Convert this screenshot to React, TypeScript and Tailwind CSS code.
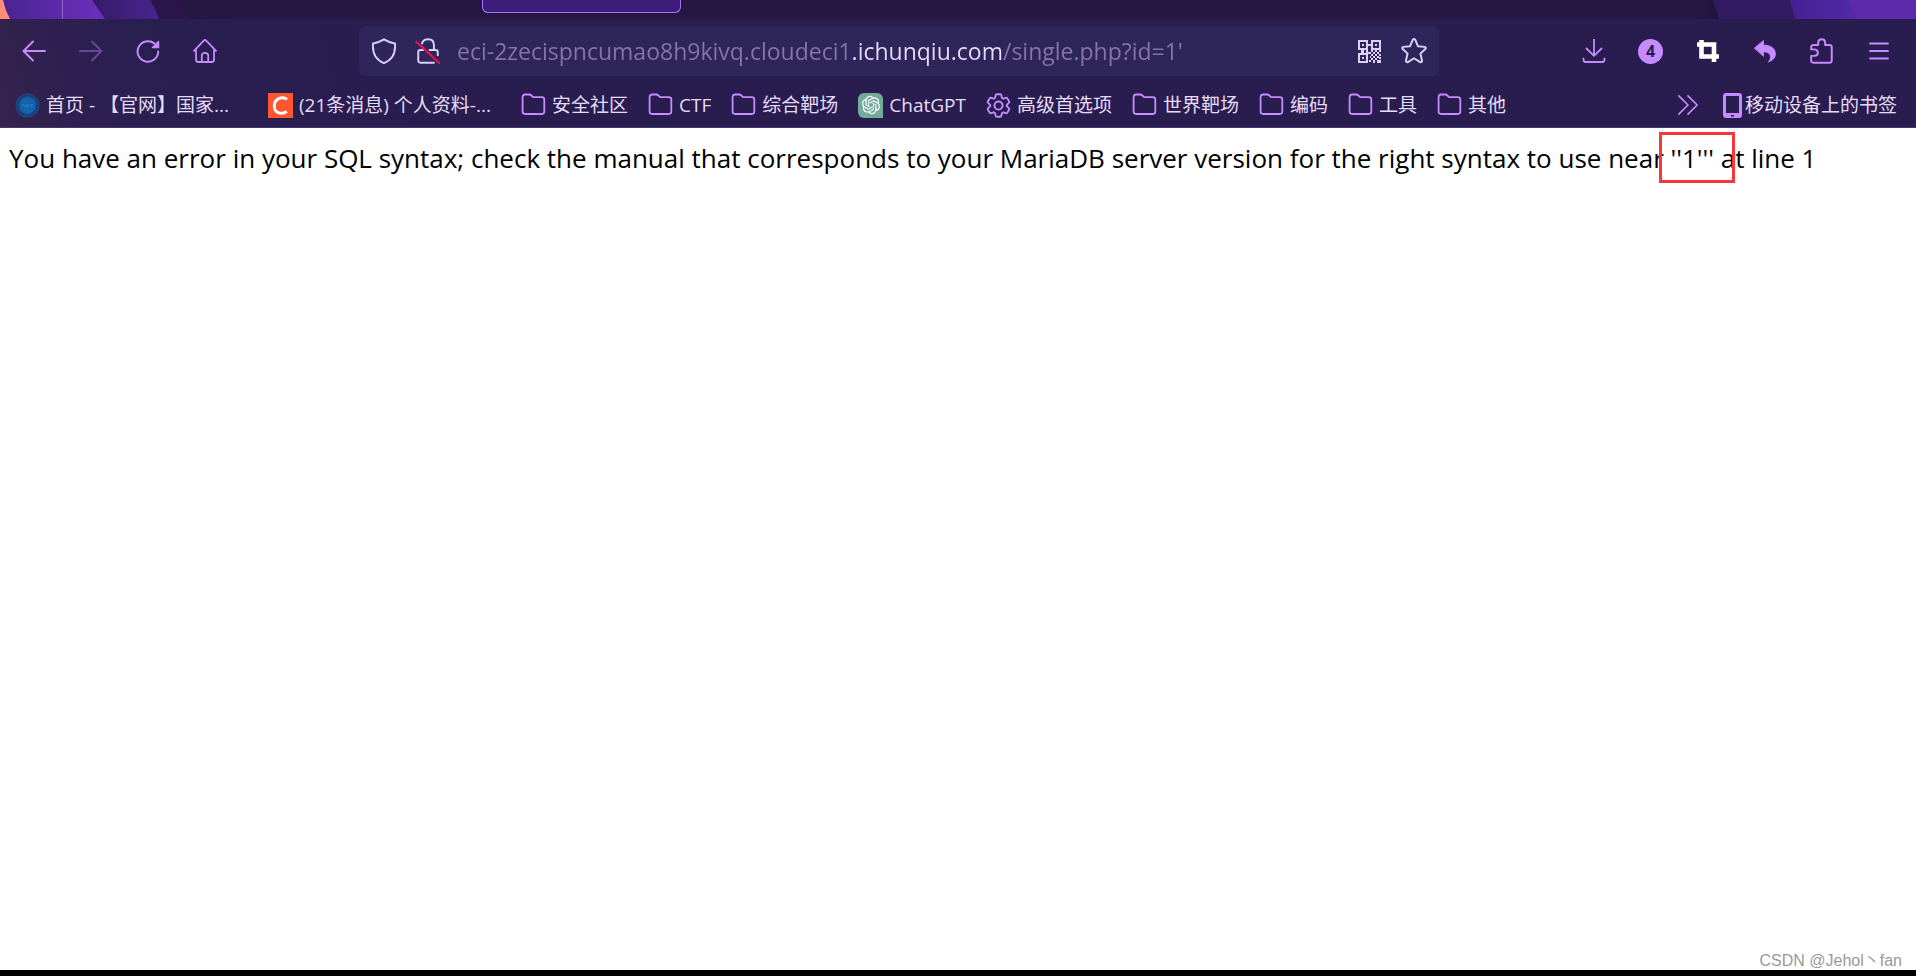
import type { ReactNode } from "react";
import { RiOpenaiFill } from "react-icons/ri";

const FONT = "font-['Open_Sans','Noto_Sans_CJK_SC',sans-serif]";

type IconProps = { children: ReactNode; className?: string };

function Icon({ children, className = "size-6 text-[#c58bff]" }: IconProps) {
  return (
    <svg
      viewBox="0 0 24 24"
      className={`shrink-0 ${className}`}
      fill="none"
      stroke="currentColor"
      strokeWidth="1.8"
      strokeLinecap="round"
      strokeLinejoin="round"
      aria-hidden="true"
    >
      {children}
    </svg>
  );
}

function FolderIcon() {
  return (
    <Icon className="h-6 w-[25px] text-[#c58bff]">
      <path d="M3.5 1.5H7.6C8.6 1.5 9.2 1.8 9.9 2.5L11.6 4.1H20.4C21.8 4.1 22.8 5.1 22.8 6.5V18.6C22.8 20 21.8 21 20.4 21H3.6C2.2 21 1.1 20 1.1 18.6V3.9C1.1 2.5 2.1 1.5 3.5 1.5Z" />
    </Icon>
  );
}

function SealIcon() {
  return (
    <svg viewBox="0 0 25 25" className="size-[25px] shrink-0" aria-hidden="true">
      <circle cx="12.5" cy="12.5" r="12" fill="#174f91" />
      <circle cx="12.5" cy="12.5" r="10.2" fill="none" stroke="#253569" strokeWidth="2.4" strokeDasharray="1.6 1" />
      <circle cx="12.5" cy="12.5" r="8" fill="#1464ad" />
      <path d="M7 14L8.5 11.5L10 14M11.5 11.5V14L13 11.5V14M15 11.5H18M15 14H18M16.5 11.5V14" fill="none" stroke="#2c7fc4" strokeWidth=".8" />
    </svg>
  );
}

function CsdnIcon() {
  return (
    <svg viewBox="0 0 25 25" className="size-[25px] shrink-0" aria-hidden="true">
      <path fill="#ff5531" d="M0 0H25V25H0Z" />
      <path d="M19 6.4C16.8 4.7 13.4 4.4 10.7 5.7C7.7 7.1 6.2 10 6.3 13.2C6.4 17.7 9.2 20.2 13.3 20.2C15.4 20.2 17.1 19.7 18.8 18.5" fill="none" stroke="#fff" strokeWidth="3" />
    </svg>
  );
}

function ChatGptIcon() {
  return (
    <span className="flex size-[25px] shrink-0 items-center justify-center rounded-md rounded-br-none bg-[#74aa9c]">
      <RiOpenaiFill className="size-[22px] text-white" aria-hidden="true" />
    </span>
  );
}

function GearIcon() {
  return (
    <Icon className="size-[25px] text-[#c58bff]">
      <circle cx="12" cy="12" r="3.9" />
      <path d="M10.4 1.2H13.6Q14.6 1.2 14.8 2.3L15.2 4.6L16.6 5.5L18.9 4.7Q20 4.3 20.5 5.2L22.2 8Q22.7 9 21.8 9.7L20 11.2V12.8L21.8 14.3Q22.7 15 22.2 16L20.5 18.8Q20 19.7 18.9 19.3L16.6 18.5L15.2 19.4L14.8 21.7Q14.6 22.8 13.6 22.8H10.4Q9.4 22.8 9.2 21.7L8.8 19.4L7.4 18.5L5.1 19.3Q4 19.7 3.5 18.8L1.8 16Q1.3 15 2.2 14.3L4 12.8V11.2L2.2 9.7Q1.3 9 1.8 8L3.5 5.2Q4 4.3 5.1 4.7L7.4 5.5L8.8 4.6L9.2 2.3Q9.4 1.2 10.4 1.2Z" />
    </Icon>
  );
}

function QrIcon() {
  return (
    <svg viewBox="0 0 23 23" className="size-[23px] shrink-0" fill="#ddd0f6" shapeRendering="crispEdges" aria-hidden="true">
      <path fillRule="evenodd" d="M0 0H10V10H0ZM2 2V8H8V2ZM13 0H23V10H13ZM15 2V8H21V2ZM0 13H10V23H0ZM2 15V21H8V15Z" />
      <path d="M4 4H6V6H4ZM17 4H19V6H17ZM4 17H6V19H4ZM10 4H13V6H10ZM3 10H6V13H3ZM8 10H10V13H8ZM10 12H13V14H10ZM13 10H15V12H13ZM17 10H19V12H17ZM15 12H17V14H15ZM19 12H21V14H19ZM21 10H23V12H21ZM13 14H15V16H13ZM17 14H19V16H17ZM21 14H23V16H21ZM12 16H13V18H12ZM15 16H17V18H15ZM19 16H21V18H19ZM13 18H15V20H13ZM17 18H19V20H17ZM21 17H23V19H21ZM11 20H13V22H11ZM15 20H17V23H15ZM19 20H23V23H19Z" />
    </svg>
  );
}

function ToolButton({ label, children }: { label: string; children: ReactNode }) {
  return (
    <button type="button" aria-label={label} className="flex h-12 w-[57px] items-center justify-center">
      {children}
    </button>
  );
}

function TabStrip() {
  return (
    <div className="relative flex h-[19px] overflow-hidden bg-[#251741]">
      <svg viewBox="0 0 200 19" className="absolute left-0 top-0 h-[19px] w-[200px]" aria-hidden="true">
        <defs>
          <linearGradient id="left-a" x1="0" x2="1">
            <stop offset="0" stopColor="#4b2391" />
            <stop offset="1" stopColor="#6b30bd" />
          </linearGradient>
          <linearGradient id="left-b" x1="0" x2="1">
            <stop offset="0" stopColor="#36196a" />
            <stop offset="1" stopColor="#48258f" />
          </linearGradient>
        </defs>
        <path fill="#2a164a" d="M150 0H177L190 19H158Z" />
        <path fill="url(#left-b)" d="M90 0H150Q156 9 159 19H104Z" />
        <path fill="url(#left-a)" d="M0 0H92L105 19H0Z" />
        <path fill="#ff8d78" d="M0 0H3Q5 10 10 19H0Z" />
        <path fill="#8c65c5" d="M62 0H63V19H62Z" />
      </svg>
      <svg viewBox="0 0 216 19" className="absolute right-0 top-0 h-[19px] w-[216px]" aria-hidden="true">
        <defs>
          <linearGradient id="right-a" x1="0" x2="1">
            <stop offset="0" stopColor="#251741" />
            <stop offset="1" stopColor="#20123f" />
          </linearGradient>
          <linearGradient id="right-b" x1="0" x2="1">
            <stop offset="0" stopColor="#452093" />
            <stop offset="1" stopColor="#5229a8" />
          </linearGradient>
        </defs>
        <path fill="url(#right-a)" d="M0 0H14L20 19H0Z" />
        <path fill="#321b62" d="M13 0H92L95 19H19Z" />
        <path fill="url(#right-b)" d="M90 0H150L158 19H95Z" />
        <path fill="#5c2aaa" d="M149 0H216V19H156Z" />
      </svg>
      <button
        type="button"
        aria-label="Tab"
        className="ml-[482px] h-[13px] w-[199px] rounded-b-md border border-t-0 border-[#ac70ff] bg-[#3d1f7b]"
      />
    </div>
  );
}

function NavBar() {
  return (
    <div className="flex h-16 items-center pr-[9px] pl-[5px]">
      <div className="flex">
        <ToolButton label="Back">
          <Icon>
            <path d="M23 12H1.5M11 2.5L1.5 12L11 21.5" strokeWidth="2" />
          </Icon>
        </ToolButton>
        <ToolButton label="Forward">
          <Icon className="size-6 text-[#6b4595]">
            <path d="M1 12H22.5M13 2.5L22.5 12L13 21.5" strokeWidth="2" />
          </Icon>
        </ToolButton>
        <ToolButton label="Reload">
          <Icon>
            <path d="M22.2 12.5A10.3 10.3 0 1 1 18.3 4.4" strokeWidth="2" />
            <path d="M22.5 2.5V8.5H16.5Z" fill="currentColor" strokeWidth="1.5" />
          </Icon>
        </ToolButton>
        <ToolButton label="Home">
          <Icon>
            <path d="M1 11.8L10.8 1.6Q12 .5 13.2 1.6L23 11.8M3 10.5V20.8Q3 23 5.2 23H18.8Q21 23 21 20.8V10.5M8.8 23V16.5Q8.8 13.8 12 13.8Q15.2 13.8 15.2 16.5V23" />
          </Icon>
        </ToolButton>
      </div>

      <div className="mx-[126px] flex h-[50px] flex-1 items-center rounded-md bg-[#2e255b] pr-3 pl-3">
        <button type="button" aria-label="Tracking protection">
          <Icon className="size-[26px] text-[#ddd0f6]">
            <path d="M12 1.2Q7 4.3 1.9 5Q1.2 12.5 4.3 17.3Q6.8 21 12 23.2Q17.2 21 19.7 17.3Q22.8 12.5 22.1 5Q17 4.3 12 1.2Z" />
          </Icon>
        </button>
        <button type="button" aria-label="Connection not secure" className="ml-[18px]">
          <Icon className="size-[26px] text-[#ddd0f6]">
            <path d="M6.5 5Q7.5 1.2 12.2 1.2Q17.5 1.2 17.5 7V11M13.5 11H19Q21 11 21 13V16M17.5 22.8H5Q3 22.8 3 20.8V13Q3 11 5 11H7.5V9" />
            <path d="M1.2 3.5L22.3 23" stroke="#e2124b" strokeWidth="2" />
          </Icon>
        </button>
        <input
          type="text"
          aria-label="Address"
          defaultValue="eci-2zecispncumao8h9kivq.cloudeci1.ichunqiu.com/single.php?id=1'"
          className="ml-4 h-9 min-w-0 flex-1 bg-[linear-gradient(90deg,#8576a6_395px,#e9dffb_395px,#e9dffb_545px,#8576a6_545px)] bg-clip-text text-[23px] text-transparent outline-none"
        />
        <button type="button" aria-label="QR code">
          <QrIcon />
        </button>
        <button type="button" aria-label="Bookmark this page" className="ml-5">
          <Icon className="size-[26px] text-[#ddd0f6]">
            <path d="M10.8 1.8Q12 .2 13.2 1.8L15.6 7.6L21.7 8.2Q23.7 8.6 22.4 10.2L17.9 14.4L19.4 20.7Q19.6 22.8 17.6 22.2L12 18.7L6.4 22.2Q4.4 22.8 4.6 20.7L6.1 14.4L1.6 10.2Q.3 8.6 2.3 8.2L8.4 7.6Z" />
          </Icon>
        </button>
      </div>

      <div className="flex">
        <ToolButton label="Downloads">
          <Icon>
            <path d="M12 0V16.5M4.5 9.5L12 16.8L19.5 9.5M1.5 19.5V20.8Q1.5 23 3.7 23H20.3Q22.5 23 22.5 20.8V19.5" />
          </Icon>
        </ToolButton>
        <ToolButton label="4 notifications">
          <span className="flex size-[25px] items-center justify-center rounded-full bg-[#c58bff] text-base font-bold text-[#291d4f]">
            4
          </span>
        </ToolButton>
        <ToolButton label="Screenshot">
          <Icon className="size-6 text-white">
            <path d="M5.5 1V17.5H23M1 5.5H18V23" strokeWidth="4.6" strokeLinecap="butt" strokeLinejoin="miter" />
          </Icon>
        </ToolButton>
        <ToolButton label="Undo">
          <Icon>
            <path d="M1.5 9L10.5 1.5V6Q22 6.5 22.5 14.5Q22.5 20.5 15.5 23Q19 18 16.3 14.8Q14.6 12.7 10.5 12.8V17Z" fill="currentColor" strokeWidth=".8" />
          </Icon>
        </ToolButton>
        <ToolButton label="Extensions">
          <Icon className="size-[26px] text-[#c58bff]">
            <path d="M4 6.5H8.5V4.2Q8.7 1.2 11.7 1.2Q14.7 1.2 14.9 4.2V6.5H19Q21 6.5 21 8.5V20.8Q21 22.8 19 22.8H4Q2 22.8 2 20.8V16.5H5Q8.2 16.2 8.2 13.5Q8.2 10.8 5 10.5H2V8.5Q2 6.5 4 6.5Z" />
          </Icon>
        </ToolButton>
        <ToolButton label="Menu">
          <Icon>
            <path d="M3 4.5H21M3 12H21M3 19.5H21" />
          </Icon>
        </ToolButton>
      </div>
    </div>
  );
}

type Bookmark = { label: string; icon: ReactNode; wide?: boolean };

const bookmarks: Bookmark[] = [
  { label: "首页 - 【官网】国家...", icon: <SealIcon />, wide: true },
  { label: "(21条消息) 个人资料-...", icon: <CsdnIcon />, wide: true },
  { label: "安全社区", icon: <FolderIcon /> },
  { label: "CTF", icon: <FolderIcon /> },
  { label: "综合靶场", icon: <FolderIcon /> },
  { label: "ChatGPT", icon: <ChatGptIcon /> },
  { label: "高级首选项", icon: <GearIcon /> },
  { label: "世界靶场", icon: <FolderIcon /> },
  { label: "编码", icon: <FolderIcon /> },
  { label: "工具", icon: <FolderIcon /> },
  { label: "其他", icon: <FolderIcon /> },
];

function BookmarksBar() {
  return (
    <nav className="flex h-11 items-center pr-[19px] pl-[15px] text-[19px] leading-6 whitespace-nowrap text-[#e6dcfa]">
      <div className="flex flex-1 gap-5">
        {bookmarks.map(({ label, icon, wide }) => (
          <a key={label} href="#" className={`flex items-center gap-[6px] ${wide ? "w-[233px]" : ""}`}>
            {icon}
            <span>{label}</span>
          </a>
        ))}
      </div>
      <button type="button" aria-label="More bookmarks" className="mr-6">
        <Icon className="size-[22px] text-[#c58bff]">
          <path d="M2 2L12 12L2 22M12 2L22 12L12 22" />
        </Icon>
      </button>
      <a href="#" className="flex items-center gap-[3px]">
        <svg viewBox="0 0 19 25" className="h-[25px] w-[19px] shrink-0" aria-hidden="true">
          <path
            fill="#c58bff"
            fillRule="evenodd"
            d="M3 0H16Q19 0 19 3V22Q19 25 16 25H3Q0 25 0 22V3Q0 0 3 0ZM3 3V20H16V3ZM8 22V23.5H11V22Z"
          />
        </svg>
        <span>移动设备上的书签</span>
      </a>
    </nav>
  );
}

export default function App() {
  return (
    <div className={`flex min-h-screen flex-col bg-white ${FONT}`}>
      <header>
        <TabStrip />
        <div className="border-b border-[#46366f] bg-[linear-gradient(75deg,#35234b_0px,#2d2050_80px,#281e50_180px,#291d4f_400px)]">
          <NavBar />
          <BookmarksBar />
        </div>
      </header>

      <main className="flex-1 px-[9px] pt-[11px] text-[26px] leading-[38px] text-black">
        <p>
          You have an error in your SQL syntax; check the manual that corresponds to your MariaDB server version for the
          right syntax to use near{" "}
          <span className="relative">
            {"''1'''"}
            <span className="absolute -top-2 -left-3 h-[51px] w-[76px] border-3 border-[#fb3637]" />
          </span>{" "}
          at line 1
        </p>
      </main>

      <footer className="border-b-6 border-black pr-[14px] text-right font-['Liberation_Sans','Noto_Sans_CJK_SC',sans-serif] text-base leading-[19px] text-[#999]">
        CSDN @Jehol丶fan
      </footer>
    </div>
  );
}
